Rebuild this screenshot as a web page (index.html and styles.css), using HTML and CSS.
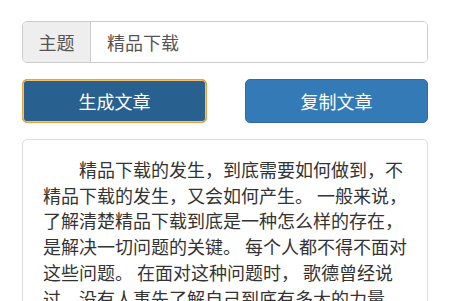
FILE: index.html
```html
<!DOCTYPE html>
<html lang="zh">
<head>
<meta charset="utf-8">
<link rel="stylesheet" href="styles.css">
</head>
<body>
<div class="page">
  <div class="input-group">
    <span class="addon">主题</span>
    <input class="field" type="text" value="精品下载">
  </div>
  <div class="actions">
    <button class="btn btn-generate" type="button">生成文章</button>
    <button class="btn btn-copy" type="button">复制文章</button>
  </div>
  <div class="article">
    <p>精品下载的发生，到底需要如何做到，不精品下载的发生，又会如何产生。 一般来说，了解清楚精品下载到底是一种怎么样的存在，是解决一切问题的关键。 每个人都不得不面对这些问题。 在面对这种问题时， 歌德曾经说过，没有人事先了解自己到底有多大的力量，直到他试过以后才知道。</p>
  </div>
</div>
</body>
</html>
```

FILE: styles.css
```css
html, body {
  margin: 0;
  padding: 0;
  background: #fff;
}
body {
  font-family: "Noto Sans CJK SC", "Noto Sans", sans-serif;
  color: #333;
}
.page {
  padding: 21px 22px 0 22px;
  display: flex;
  flex-direction: column;
  gap: 16px;
}
.input-group {
  display: flex;
  height: 42px;
  box-sizing: border-box;
  border: 1px solid #ccc;
  border-radius: 5px;
  overflow: hidden;
}
.addon {
  width: 67px;
  flex: none;
  display: flex;
  align-items: center;
  justify-content: center;
  background: #eee;
  border-right: 1px solid #ccc;
  color: #555;
  font-size: 18px;
}
.field {
  flex: 1;
  min-width: 0;
  border: 0;
  outline: none;
  padding: 0 16px;
  font-family: inherit;
  font-size: 18px;
  color: #555;
  background: #fff;
}
.actions {
  display: flex;
  justify-content: space-between;
}
.btn {
  height: 44px;
  box-sizing: border-box;
  border-radius: 5px;
  font-family: inherit;
  font-size: 18px;
  color: #fff;
  padding: 0;
  cursor: pointer;
}
.btn-generate {
  width: 185px;
  background: #286090;
  border: 1px solid #e8a33a;
  box-shadow: 0 0 0 1px #f2c26b inset;
}
.btn-copy {
  width: 183px;
  background: #337ab7;
  border: 1px solid #2e6da4;
}
.article {
  border: 1px solid #ddd;
  border-radius: 5px;
  padding: 17px 19px 17px 20px;
}
.article p {
  margin: 0;
  font-size: 18px;
  line-height: 25.7px;
  text-indent: 2em;
  color: #333;
}
```
